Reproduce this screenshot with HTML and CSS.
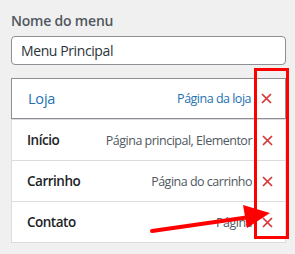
FILE: index.html
```html
<!DOCTYPE html>
<html lang="pt">
<head>
    <meta charset="UTF-8">
    <title>Menu</title>
    <link rel="stylesheet" href="styles.css">
</head>
<body>
    <div class="panel">
        <label class="field-label" for="menuName">Nome do menu</label>
        <input type="text" id="menuName" class="menu-name" value="Menu Principal">

        <ul class="menu-items">
            <li class="item selected">
                <span class="title">Loja</span>
                <span class="type">Página da loja</span>
                <svg class="remove" width="11" height="11" viewBox="0 0 11 11"><path d="M1 1L10 10M10 1L1 10"/></svg>
            </li>
            <li class="item">
                <span class="title">Início</span>
                <span class="type">Página principal, Elementor</span>
                <svg class="remove" width="11" height="11" viewBox="0 0 11 11"><path d="M1 1L10 10M10 1L1 10"/></svg>
            </li>
            <li class="item">
                <span class="title">Carrinho</span>
                <span class="type">Página do carrinho</span>
                <svg class="remove" width="11" height="11" viewBox="0 0 11 11"><path d="M1 1L10 10M10 1L1 10"/></svg>
            </li>
            <li class="item">
                <span class="title">Contato</span>
                <span class="type">Página</span>
                <svg class="remove" width="11" height="11" viewBox="0 0 11 11"><path d="M1 1L10 10M10 1L1 10"/></svg>
            </li>
        </ul>
    </div>

    <!-- annotation -->
    <div class="highlight"></div>
    <svg class="arrow" width="295" height="254" viewBox="0 0 295 254">
        <line x1="152" y1="231" x2="250" y2="217" stroke="#ff0000" stroke-width="4" stroke-linecap="round"/>
        <polygon points="270,213 243,205 247,228" fill="#ff0000"/>
    </svg>
</body>
</html>
```

FILE: styles.css
```css
body {
    margin: 0;
    background-color: #f0f0f1;
    font-family: "Open Sans", sans-serif;
    color: #1d2327;
}

.panel {
    padding: 11px 9px 0 11px;
}

.field-label {
    display: block;
    font-size: 14px;
    font-weight: 600;
    letter-spacing: -0.2px;
    color: #50575e;
    margin-bottom: 6px;
}

.menu-name {
    box-sizing: border-box;
    display: block;
    width: 275px;
    height: 29px;
    margin: 0;
    padding: 0 9px;
    border: 1px solid #8c8f94;
    border-radius: 4px;
    background-color: #fff;
    font-family: "Open Sans", sans-serif;
    font-size: 14px;
    letter-spacing: -0.4px;
    color: #2c3338;
}

.menu-items {
    list-style: none;
    margin: 13px 0 0;
    padding: 0;
    width: 275px;
    background-color: #fff;
    border: 1px solid #dcdcde;
    box-shadow: 0 1px 1px rgba(0, 0, 0, 0.04);
    box-sizing: border-box;
}

.item {
    display: flex;
    align-items: center;
    height: 40px;
    padding: 0 12px 0 15px;
    border-top: 1px solid #dcdcde;
}

.item:first-child {
    border-top: none;
}

.item.selected {
    height: 39px;
    margin: -1px -1px 0;
    border: 1px solid #8c8f94;
    padding-left: 16px;
    padding-right: 13px;
}

.title {
    font-size: 13.5px;
    font-weight: 600;
    letter-spacing: -0.5px;
    color: #1d2327;
}

.type {
    margin-left: auto;
    font-size: 12.5px;
    letter-spacing: -0.5px;
    color: #50575e;
}

.remove {
    margin-left: 10px;
    fill: none;
    stroke: #d63638;
    stroke-width: 1.7;
}

.selected .title,
.selected .type {
    color: #2271b1;
    font-weight: 400;
}

.selected .title {
    font-size: 14.5px;
    letter-spacing: -0.2px;
}

.highlight {
    position: absolute;
    left: 254px;
    top: 68px;
    width: 29px;
    height: 165px;
    border: 3px solid #ff0000;
}

.arrow {
    position: absolute;
    left: 0;
    top: 0;
}
```
